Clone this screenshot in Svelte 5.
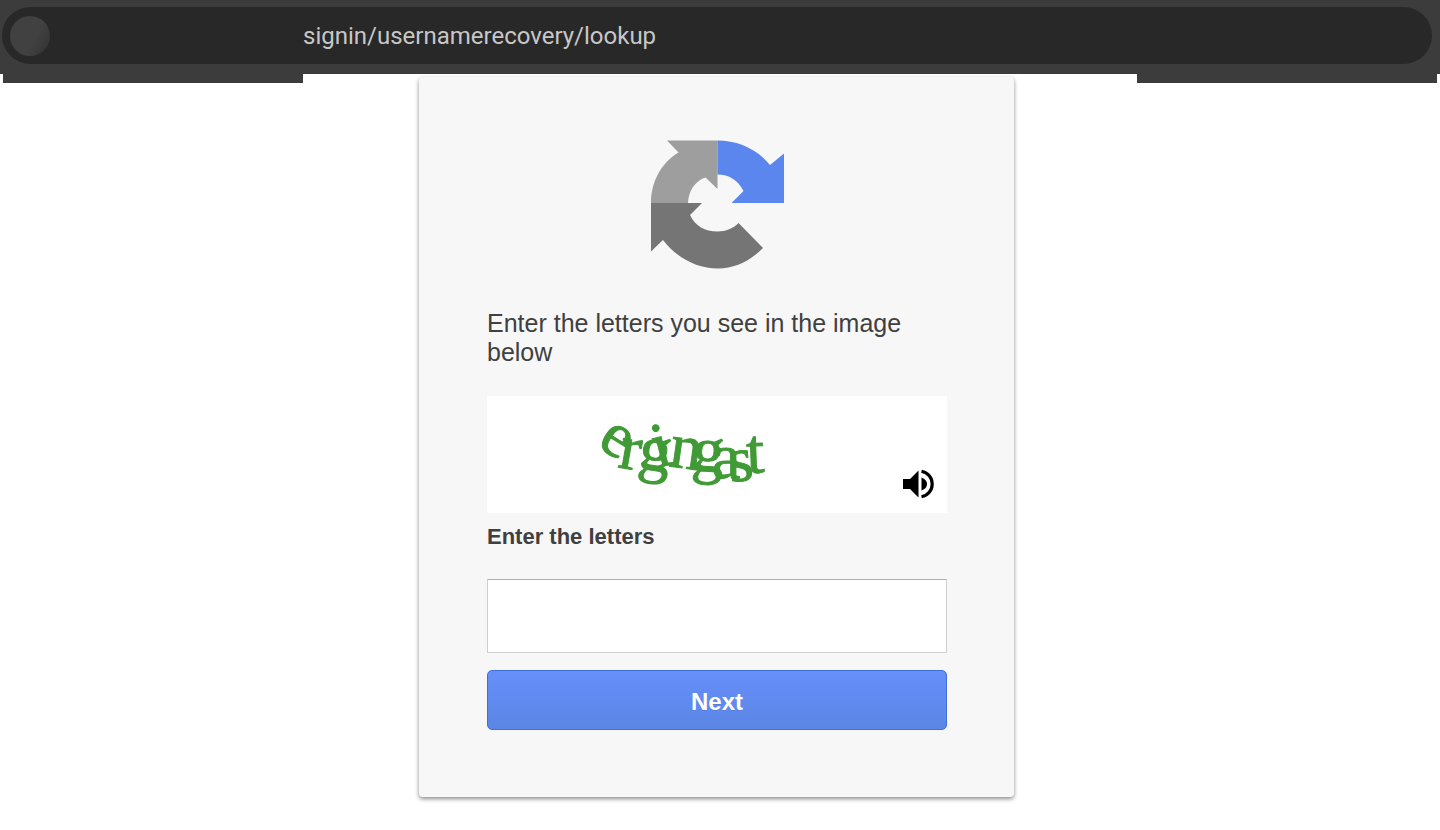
<script>
	let letters = "";

	// each captcha letter gets its own place and tilt
	const word = "ergingast";
	const captcha = [
		{ x: 40, y: 50, tilt: 32 },
		{ x: 61, y: 71, tilt: 10 },
		{ x: 81, y: 72, tilt: 8 },
		{ x: 101, y: 72, tilt: -14 },
		{ x: 112, y: 70, tilt: 8 },
		{ x: 135, y: 74, tilt: 4 },
		{ x: 156, y: 82, tilt: 0 },
		{ x: 174, y: 86, tilt: -6 },
		{ x: 191, y: 77, tilt: -2 }
	];
	const list = (key) => captcha.map((letter) => letter[key]).join(" ");
</script>

<header>
	<div class="address-bar">
		<span class="site-icon"></span>
		<span class="url">signin/usernamerecovery/lookup</span>
	</div>
	<div class="tabs">
		<div class="tab"></div>
		<div class="tab"></div>
	</div>
</header>

<main>
	<form class="card" on:submit|preventDefault>
		<svg class="logo" viewBox="0 0 133 129" aria-hidden="true">
			<path fill="#9e9e9e" d="M16 0.5H66.500V49L54.500 37.500C44 41 37.500 51 37 63H0C0 42 10 23 27.500 12.500Z" />
			<path fill="#5b86ee" d="M66.500 0.500C87 0.500 106 9 119 25L133 13.500V63H80.500L92.500 51C87 40 78 34.500 66.500 34.500Z" />
			<path fill="#757575" d="M0 63H51L39 75C44 86 54 91.500 66.500 91.500C75 91.500 82 88.500 87.500 83L112 108C99 121 84 128.500 67 128.500C45 128.500 25 117 12 100L0 111.500Z" />
		</svg>

		<h1>Enter the letters you see in the image below</h1>

		<div class="captcha">
			<svg class="word" viewBox="0 0 230 117">
				<text x={list("x")} y={list("y")} rotate={list("tilt")}>{word}</text>
			</svg>
			<button type="button" class="audio" aria-label="Listen">
				<svg viewBox="0 0 32 30">
					<path d="M0 10H7L15.500 1.500V28.500L7 20H0Z" />
					<path d="M18.500 8.500Q24 10.500 24 15T18.500 21.500Z" />
					<path d="M18.500 2.200C25 3.500 29.200 8.700 29.200 15S25 26.500 18.500 27.800" fill="none" stroke="#000" stroke-width="3.200" />
				</svg>
			</button>
		</div>

		<label for="letters">Enter the letters</label>
		<input id="letters" type="text" autocomplete="off" bind:value={letters} />
		<button type="submit" class="next">Next</button>
	</form>
</main>

<style>
	:global(body) {
		margin: 0;
		background: #fff;
		font-family: "Liberation Sans", Arial, sans-serif;
		color: #404040;
	}

	header {
		position: relative;
		padding: 7px 8px 10px 2px;
		background: #3c3c3c;
	}

	.address-bar {
		display: flex;
		align-items: center;
		height: 57px;
		padding-left: 8px;
		box-sizing: border-box;
		border-radius: 29px;
		background: #282828;
	}

	.site-icon {
		width: 40px;
		height: 40px;
		border-radius: 50%;
		background: linear-gradient(120deg, #414141 60%, #303030);
	}

	.url {
		margin-left: 253px;
		font-family: Roboto, Inter, sans-serif;
		font-size: 24px;
		line-height: 30px;
		color: #c7c7c7;
	}

	/* hangs below the bar, over the page */
	.tabs {
		position: absolute;
		top: 100%;
		left: 3px;
		right: 3px;
		display: flex;
		justify-content: space-between;
	}

	.tab {
		width: 300px;
		height: 9px;
		background: #3c3c3c;
	}

	main {
		display: flex;
		justify-content: center;
		padding: 3px 7px 32px 0;
	}

	.card {
		display: flex;
		flex-direction: column;
		width: 100%;
		max-width: 595px;
		padding: 63px 67px 67px 68px;
		box-sizing: border-box;
		border-radius: 4px;
		background: #f7f7f7;
		box-shadow: 0 2px 4px rgba(0, 0, 0, 0.45);
	}

	.logo {
		align-self: center;
		width: 133px;
		height: 129px;
	}

	h1 {
		margin: 40px 0 29px;
		font-size: 25px;
		font-weight: normal;
		line-height: 29px;
	}

	.captcha {
		position: relative;
		height: 117px;
		background: #fff;
	}

	.word {
		display: block;
		width: 230px;
		height: 117px;
		margin-left: 69px;
	}

	.word text {
		font-family: "Liberation Serif", "Times New Roman", serif;
		font-size: 64px;
		fill: #409a35;
		stroke: #409a35;
		stroke-width: 1px;
	}

	.audio {
		position: absolute;
		right: 12px;
		bottom: 14px;
		padding: 0;
		border: 0;
		background: none;
		cursor: pointer;
	}

	.audio svg {
		display: block;
		width: 32px;
		height: 30px;
	}

	label {
		margin: 11px 0 29px;
		font-size: 22px;
		font-weight: bold;
		line-height: 26px;
	}

	input {
		height: 74px;
		padding: 0 16px;
		box-sizing: border-box;
		border: 1px solid #cfcfcf;
		border-top-color: #b0b0b0;
		border-radius: 1px;
		background: #fff;
		font: inherit;
		font-size: 25px;
	}

	.next {
		height: 60px;
		margin-top: 17px;
		padding: 4px 16px 0;
		border: 1px solid #3f6fdb;
		border-radius: 5px;
		background: linear-gradient(#668ffa, #5b86e5);
		font-family: inherit;
		font-size: 24px;
		font-weight: bold;
		color: #fff;
		text-shadow: 0 1px rgba(0, 0, 0, 0.1);
		cursor: pointer;
	}
</style>
